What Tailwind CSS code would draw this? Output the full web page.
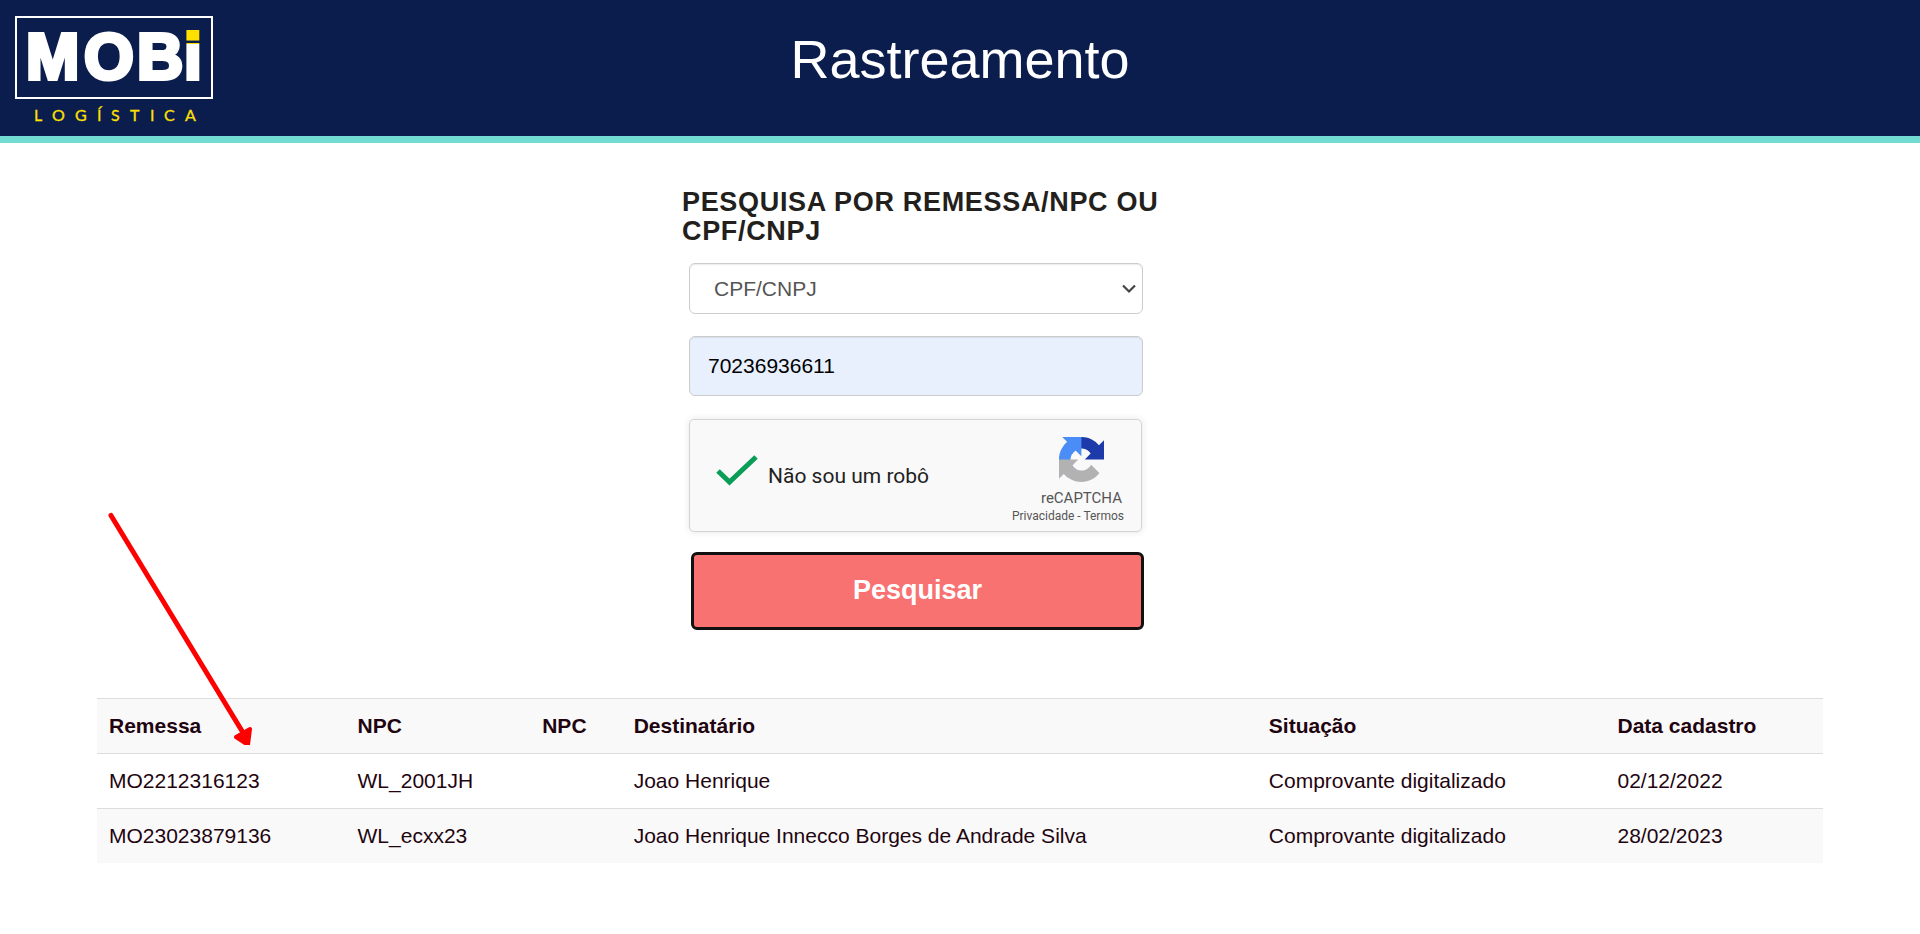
<!DOCTYPE html>
<html lang="pt-BR">
<head>
  <meta charset="UTF-8" />
  <meta name="viewport" content="width=device-width, initial-scale=1.0" />
  <title>Rastreamento - MOBi Logística</title>
  <script src="https://cdn.jsdelivr.net/npm/@tailwindcss/browser@4"></script>
</head>
<body class="relative bg-white min-h-screen font-['Liberation_Sans',Arial,sans-serif] text-[21px] leading-[30px] text-[#1f0510]">

  <!-- Topo -->
  <header class="grid grid-cols-[1fr_auto_1fr] items-start bg-[#0b1d4d] border-b-[7px] border-[#72dbd2] px-[15px] pt-4">
    <a href="#" aria-label="MOBi Logística">
      <svg class="block w-[198px] h-[120px]" viewBox="0 0 198 120">
        <defs>
          <linearGradient id="pingo" gradientUnits="userSpaceOnUse" x1="0" y1="0" x2="0" y2="66">
            <stop offset="0.43" stop-color="#ffe000" />
            <stop offset="0.43" stop-color="#fff" />
          </linearGradient>
        </defs>
        <rect x="1" y="1" width="196" height="81" fill="none" stroke="#fff" stroke-width="2" />
        <text x="11 69 122 169" y="63" fill="#fff" stroke="#fff" stroke-width="4" font-family="Liberation Sans, Arial, sans-serif" font-weight="700" font-size="64">MOB<tspan fill="url(#pingo)" stroke="url(#pingo)">i</tspan></text>
        <text x="19 37 60 82 96 115 135 149 170" y="105" fill="#ffe000" stroke="#ffe000" stroke-width="0.3" font-family="Lato, sans-serif" font-size="16">LOGÍSTICA</text>
      </svg>
    </a>
    <h1 class="pt-3 text-[54px] leading-[62px] text-white">Rastreamento</h1>
  </header>

  <!-- Formulário de pesquisa -->
  <form class="w-[556px] max-w-full mx-auto pt-[45px]">
    <h3 class="text-[27px] leading-[29px] font-bold tracking-wide text-[#231f1d]">PESQUISA POR REMESSA/NPC OU CPF/CNPJ</h3>

    <div class="w-[454px] ml-[7px] mt-[17px]">
      <div class="relative">
        <select aria-label="Tipo de pesquisa" class="appearance-none block w-full h-[51px] pl-6 pr-8 bg-white text-[#555] border border-[#ccc] rounded-md shadow-[inset_0_1px_1px_rgba(0,0,0,0.08)]">
          <option>CPF/CNPJ</option>
          <option>Remessa/NPC</option>
        </select>
        <svg class="absolute right-[6px] top-[21px] w-4 h-[10px] pointer-events-none" viewBox="0 0 16 10" fill="none" stroke="#444" stroke-width="2.2"><path d="M2 1.5l6 6 6-6" /></svg>
      </div>

      <input type="text" aria-label="CPF/CNPJ" value="70236936611" class="block w-full h-[60px] mt-[22px] px-[18px] bg-[#e8f0fe] text-black border border-[#ccc] rounded-md shadow-[inset_0_1px_1px_rgba(0,0,0,0.08)]" />

      <!-- reCAPTCHA -->
      <div class="flex justify-between w-[453px] h-[113px] mt-[23px] pl-[26px] pr-[17px] bg-[#f9f9f9] border border-[#d3d3d3] rounded-[5px] shadow-[0_0_6px_1px_rgba(0,0,0,0.08)] font-[Roboto,sans-serif]">
        <label class="flex items-center gap-[9px] text-[#222]">
          <span class="relative block w-[43px] h-[34px] mb-2">
            <input type="checkbox" checked class="appearance-none absolute inset-0" />
            <svg class="absolute inset-0 w-[43px] h-[34px] overflow-visible pointer-events-none" viewBox="0 0 43 34" fill="none" stroke="#0a9d58" stroke-width="5"><path d="M2 16l11.500 11L40 2" /></svg>
          </span>
          <span>Não sou um robô</span>
        </label>
        <div class="flex flex-col items-end pt-[17px] text-[#555]">
          <div class="flex flex-col items-center mr-[2px]">
            <svg class="w-[45px] h-[45px]" viewBox="0 0 64 64">
              <path fill="#1c3aa9" d="M64 31.955l-.033-1.37V4.687l-7.16 7.16C50.948 4.674 42.033.093 32.05.093c-10.4 0-19.622 4.96-25.458 12.64l11.736 11.86a15.55 15.55 0 0 1 4.754-5.334c2.05-1.6 4.952-2.906 8.968-2.906.485 0 .86.057 1.135.163 4.976.393 9.288 3.14 11.828 7.124l-8.307 8.307L64 31.953" />
              <path fill="#4a8df6" d="M31.862.094l-1.37.033H4.594l7.16 7.16C4.58 13.147 0 22.06 0 32.046c0 10.4 4.96 19.622 12.64 25.458L24.5 45.768a15.55 15.55 0 0 1-5.334-4.754c-1.6-2.05-2.906-4.952-2.906-8.968 0-.485.057-.86.163-1.135.393-4.976 3.14-9.288 7.124-11.828l8.307 8.307L31.86.095" />
              <path fill="#b2b2b2" d="M.001 32.045l.033 1.37v25.898l7.16-7.16c5.86 7.173 14.774 11.754 24.76 11.754 10.4 0 19.622-4.96 25.458-12.64l-11.736-11.86a15.55 15.55 0 0 1-4.754 5.334c-2.05 1.6-4.952 2.906-8.968 2.906-.485 0-.86-.057-1.135-.163-4.976-.393-9.288-3.14-11.828-7.124l8.307-8.307c-10.522.04-22.4.066-27.295-.005" />
            </svg>
            <span class="pt-[6px] text-[15px] leading-[20px]">reCAPTCHA</span>
          </div>
          <div class="text-[12px] leading-[16px]">
            <a href="#">Privacidade</a> - <a href="#">Termos</a>
          </div>
        </div>
      </div>

      <button type="submit" class="block w-[453px] h-[78px] ml-[2px] mt-5 pb-[2px] bg-[#f87272] border-[3px] border-[#111] rounded-md text-[27px] font-bold text-white">Pesquisar</button>
    </div>
  </form>

  <!-- Resultado -->
  <div class="px-[97px] mt-[68px]">
    <table class="table-fixed w-full text-left">
      <colgroup>
        <col class="w-[14.4%]" />
        <col class="w-[10.7%]" />
        <col class="w-[5.3%]" />
        <col class="w-[36.8%]" />
        <col class="w-[20.2%]" />
        <col class="w-[12.6%]" />
      </colgroup>
      <thead>
        <tr class="border-t border-[#ddd] bg-[#f9f9f9]">
          <th class="p-3">Remessa</th>
          <th class="p-3">NPC</th>
          <th class="p-3">NPC</th>
          <th class="p-3">Destinatário</th>
          <th class="p-3">Situação</th>
          <th class="p-3">Data cadastro</th>
        </tr>
      </thead>
      <tbody>
        <tr class="border-t border-[#ddd]">
          <td class="p-3">MO2212316123</td>
          <td class="p-3">WL_2001JH</td>
          <td class="p-3"></td>
          <td class="p-3">Joao Henrique</td>
          <td class="p-3">Comprovante digitalizado</td>
          <td class="p-3">02/12/2022</td>
        </tr>
        <tr class="border-t border-[#ddd] bg-[#f9f9f9]">
          <td class="p-3">MO23023879136</td>
          <td class="p-3">WL_ecxx23</td>
          <td class="p-3"></td>
          <td class="p-3">Joao Henrique Innecco Borges de Andrade Silva</td>
          <td class="p-3">Comprovante digitalizado</td>
          <td class="p-3">28/02/2023</td>
        </tr>
      </tbody>
    </table>
  </div>

  <!-- Seta apontando para a remessa -->
  <svg class="absolute left-[100px] top-[505px] w-40 h-60 pointer-events-none" viewBox="0 0 160 240" stroke="#f00" stroke-linecap="round" stroke-linejoin="round">
    <path d="M11 10.500L142 226" stroke-width="5" fill="none" />
    <path d="M136 232l14-8-2 16z" stroke-width="4" fill="#f00" />
  </svg>

</body>
</html>
